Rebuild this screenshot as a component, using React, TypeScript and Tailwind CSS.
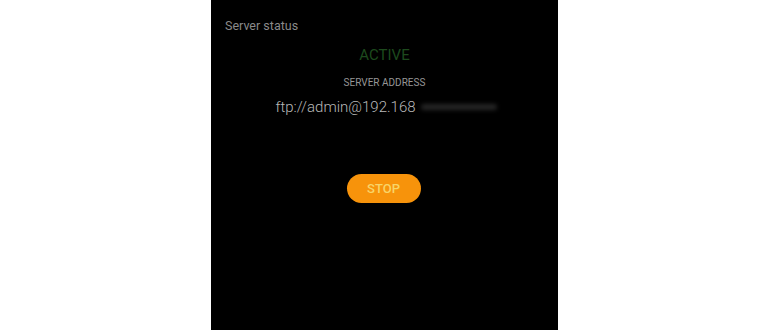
import React from "react";

export default function App() {
  return (
    <div className="w-[770px] h-[330px] bg-white flex pl-[211px]" style={{ fontFamily: "Roboto, 'Noto Sans', sans-serif" }}>
      <div className="w-[347px] h-[330px] bg-black flex flex-col">
        <div className="pl-[14px] pt-[18px] text-[12.5px] leading-[16px] text-[#8a8a8a]">Server status</div>
        <div className="mt-[12px] text-center text-[15px] leading-[18px] text-[#1d4a1d]">ACTIVE</div>
        <div className="mt-[13px] text-center text-[10px] leading-[12px] text-[#969696]">SERVER ADDRESS</div>
        <div className="mt-[8px] flex justify-center items-center">
          <span className="ml-[3px] text-[15px] leading-[20px] font-light text-[#b8b8b8]">ftp://admin@192.168</span>
          <span className="ml-[5px] w-[76px] h-[6px] rounded-full bg-[#262626] blur-[2px]"></span>
        </div>
        <div className="mt-[57px] flex justify-center">
          <div className="ml-[-2px] w-[74px] h-[29px] rounded-full bg-[#f7930b] flex items-center justify-center text-[13px] font-medium text-[#f8d568]">STOP</div>
        </div>
      </div>
    </div>
  );
}
